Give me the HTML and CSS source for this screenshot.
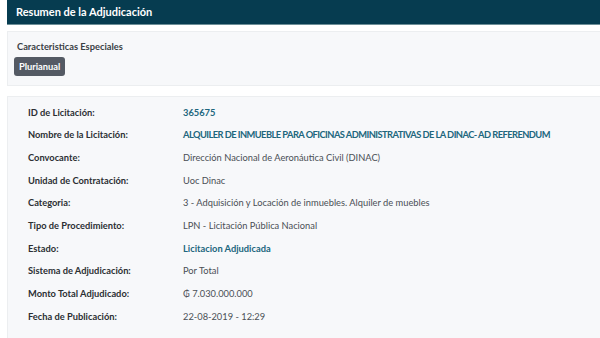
FILE: index.html
```html
<!DOCTYPE html>
<html lang="es">
<head>
  <meta charset="UTF-8" />
  <title>Resumen de la Adjudicación</title>
  <link rel="stylesheet" href="styles.css">
</head>
<body>

<div class="page">
  <div class="panel-heading">Resumen de la Adjudicación</div>

  <div class="well especiales">
    <div class="well-title">Caracteristicas Especiales</div>
    <span class="badge">Plurianual</span>
  </div>

  <div class="well detalle">
    <div class="row"><div class="label">ID de Licitación:</div><div class="value link">365675</div></div>
    <div class="row"><div class="label">Nombre de la Licitación:</div><div class="value link caps">ALQUILER DE INMUEBLE PARA OFICINAS ADMINISTRATIVAS DE LA DINAC- AD REFERENDUM</div></div>
    <div class="row"><div class="label">Convocante:</div><div class="value">Dirección Nacional de Aeronáutica Civil (DINAC)</div></div>
    <div class="row"><div class="label">Unidad de Contratación:</div><div class="value">Uoc Dinac</div></div>
    <div class="row"><div class="label">Categoria:</div><div class="value">3 - Adquisición y Locación de inmuebles. Alquiler de muebles</div></div>
    <div class="row"><div class="label">Tipo de Procedimiento:</div><div class="value">LPN - Licitación Pública Nacional</div></div>
    <div class="row"><div class="label">Estado:</div><div class="value link">Licitacion Adjudicada</div></div>
    <div class="row"><div class="label">Sistema de Adjudicación:</div><div class="value">Por Total</div></div>
    <div class="row"><div class="label">Monto Total Adjudicado:</div><div class="value">₲ 7.030.000.000</div></div>
    <div class="row"><div class="label">Fecha de Publicación:</div><div class="value">22-08-2019 - 12:29</div></div>
  </div>
</div>

</body>
</html>
```

FILE: styles.css
```css
* { margin: 0; padding: 0; box-sizing: border-box; }
body, html {
  height: 100%;
  font-family: Lato, "Liberation Sans", sans-serif;
  font-size: 9.3px;
  color: #333;
  background: #fff;
  overflow: hidden;
}

.page {
  padding-left: 7px;
}

.panel-heading {
  background: #063c50;
  color: #fff;
  font-weight: bold;
  font-size: 11px;
  height: 25px;
  line-height: 23px;
  padding-left: 9px;
  border-bottom: 1px solid #6d8f98;
}

.well {
  background: #f7f8fa;
  border: 1px solid #eceef0;
  border-right: none;
}

.especiales {
  margin-top: 6px;
  height: 55px;
  padding: 9px 6px;
}

.well-title {
  font-weight: bold;
  color: #3a3f45;
  margin-left: 3px;
  margin-bottom: 5px;
}

.badge {
  display: inline-block;
  background: #545a64;
  color: #fff;
  font-weight: bold;
  padding: 4px 5px;
  border-radius: 3px;
}

.detalle {
  margin-top: 10px;
  padding: 4px 0 10px 20px;
}

.row {
  display: flex;
  align-items: center;
  height: 22.67px;
}

.label {
  flex: 0 0 155px;
  font-weight: bold;
  color: #2b2f33;
}

.value {
  white-space: nowrap;
  color: #4a4f55;
}

.value.link {
  color: #20667d;
  font-weight: bold;
}

.value.caps {
  letter-spacing: -0.55px;
}
```
